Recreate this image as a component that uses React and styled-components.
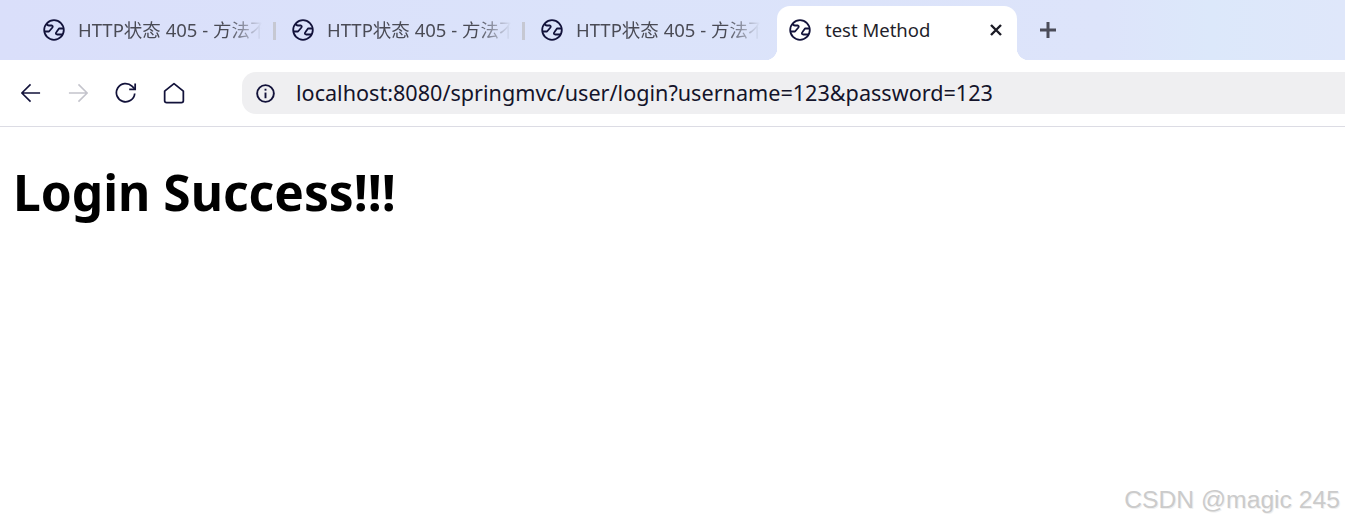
import React from "react";
import styled, { createGlobalStyle } from "styled-components";

const GlobalStyle = createGlobalStyle`
  html, body {
    margin: 0;
    padding: 0;
    background: #fff;
    overflow: hidden;
  }
`;

const Page = styled.div`
  position: relative;
  width: 1345px;
  height: 520px;
  font-family: "Noto Sans", "Noto Sans CJK SC", sans-serif;
  background: #fff;
`;

const TabStrip = styled.div`
  height: 60px;
  padding-left: 28px;
  display: flex;
  align-items: flex-end;
  background: linear-gradient(90deg, #dadffa 0%, #dbe3fa 45%, #dde4fa 82%, #dce8fa 90%, #dfe7fa 100%);
`;

const Tab = styled.div`
  position: relative;
  box-sizing: border-box;
  width: 249px;
  height: 54px;
  padding: 0 0 6px 15px;
  display: flex;
  align-items: center;
`;

const ActiveTab = styled(Tab)`
  width: 240px;
  margin-left: 2px;
  padding: 0 14px 6px 12px;
  background: #fff;
  border-radius: 13px 13px 0 0;

  &::before,
  &::after {
    content: "";
    position: absolute;
    bottom: 0;
    width: 12px;
    height: 12px;
  }
  &::before {
    left: -12px;
    background: radial-gradient(circle at 0 0, transparent 12px, #fff 12.5px);
  }
  &::after {
    right: -12px;
    background: radial-gradient(circle at 100% 0, transparent 12px, #fff 12.5px);
  }
`;

const Title = styled.span`
  width: 190px;
  margin-left: 13px;
  font-size: 18.5px;
  line-height: 24px;
  white-space: nowrap;
  color: #4a4b55;
  -webkit-mask-image: linear-gradient(90deg, #000 150px, transparent 184px);
  mask-image: linear-gradient(90deg, #000 150px, transparent 184px);
`;

const ActiveTitle = styled.span`
  flex: 1;
  margin-left: 14px;
  font-size: 18.5px;
  line-height: 24px;
  color: #1f1f2b;
`;

const Divider = styled.span`
  position: absolute;
  right: 1px;
  top: 16px;
  width: 3px;
  height: 18px;
  background: #c6c8d2;
`;

const NewTab = styled.div`
  margin: 0 0 6px 19px;
  width: 24px;
  height: 48px;
  display: flex;
  align-items: center;
  justify-content: center;
`;

const Toolbar = styled.div`
  box-sizing: border-box;
  height: 67px;
  padding: 12px 0 0 18px;
  display: flex;
  align-items: flex-start;
  background: #fff;
  border-radius: 13px 0 0 0;
  border-bottom: 1px solid #dcdce4;
`;

const NavButton = styled.div`
  width: 26px;
  height: 42px;
  margin-right: ${(p) => p.$gap}px;
  display: flex;
  align-items: center;
  justify-content: center;
`;

const AddressBar = styled.div`
  flex: 1;
  height: 42px;
  margin-left: 55px;
  padding-left: 14px;
  display: flex;
  align-items: center;
  background: #efeff1;
  border-radius: 14px 0 0 14px;
`;

const Url = styled.span`
  margin-left: 21px;
  font-size: 21.6px;
  line-height: 30px;
  color: #14142b;
  white-space: nowrap;
`;

const Heading = styled.h1`
  margin: 33px 0 0 13px;
  font-size: 49.7px;
  line-height: 64px;
  font-weight: 700;
  color: #000;
`;

const Watermark = styled.div`
  position: absolute;
  right: 5px;
  bottom: 6px;
  font-family: "Liberation Sans", Arial, sans-serif;
  font-size: 24.7px;
  line-height: 29px;
  color: #cbcbcb;
  text-shadow: 1px 1px 0 #f0f0f0;
`;

function GlobeIcon() {
  return (
    <svg width="22" height="22" viewBox="0 0 22 22" fill="none" stroke="#12123a" strokeWidth="1.8">
      <circle cx="11" cy="11" r="9.8" />
      <path d="M1.5 12.5 H6 L9 9 Q10.5 7 9 6.5 H6 Q4 6.5 4 4.5" strokeLinejoin="round" />
      <path d="M20.5 9.5 H16 L13.5 13 Q12 15 14 15.5 H20" strokeLinejoin="round" />
    </svg>
  );
}

function CloseIcon() {
  return (
    <svg width="14" height="14" viewBox="0 0 14 14" stroke="#1b1b25" strokeWidth="2.4">
      <path d="M2 2 L12 12 M12 2 L2 12" />
    </svg>
  );
}

function PlusIcon() {
  return (
    <svg width="18" height="18" viewBox="0 0 18 18" stroke="#4b4c58" strokeWidth="3">
      <path d="M9 1 V17 M1 9 H17" />
    </svg>
  );
}

function ArrowIcon({ color, flip }) {
  return (
    <svg
      width="20"
      height="20"
      viewBox="0 0 22 22"
      fill="none"
      stroke={color}
      strokeWidth="1.7"
      style={flip ? { transform: "scaleX(-1)" } : undefined}
    >
      <path d="M1 11 H21 M10.5 1.5 L1 11 L10.5 20.5" />
    </svg>
  );
}

function ReloadIcon() {
  return (
    <svg width="22" height="22" viewBox="0 0 24 24" fill="none" stroke="#12123a" strokeWidth="1.9">
      <path d="M21.5 12.5 A10 10 0 1 1 18.5 4.5 L21.5 7.5" />
      <path d="M22 1.5 V8 H15.5" />
    </svg>
  );
}

function HomeIcon() {
  return (
    <svg width="22" height="22" viewBox="0 0 24 24" fill="none" stroke="#12123a" strokeWidth="1.9" strokeLinejoin="round">
      <path d="M12 1.8 L22.2 10 V20.5 Q22.2 22.6 20 22.6 H4 Q1.8 22.6 1.8 20.5 V10 Z" />
    </svg>
  );
}

function InfoIcon() {
  return (
    <svg width="19" height="19" viewBox="0 0 20 20" fill="none" stroke="#12123a" strokeWidth="2">
      <circle cx="10" cy="10" r="8.8" />
      <path d="M10 9 V15" />
      <path d="M10 5 V7" />
    </svg>
  );
}

const tabs = ["HTTP状态 405 - 方法不", "HTTP状态 405 - 方法不", "HTTP状态 405 - 方法不"];

export default function App() {
  return (
    <Page>
      <GlobalStyle />
      <TabStrip>
        {tabs.map((title, i) => (
          <Tab key={i}>
            <GlobeIcon />
            <Title>{title}</Title>
            {i < 2 && <Divider />}
          </Tab>
        ))}
        <ActiveTab>
          <GlobeIcon />
          <ActiveTitle>test Method</ActiveTitle>
          <CloseIcon />
        </ActiveTab>
        <NewTab>
          <PlusIcon />
        </NewTab>
      </TabStrip>
      <Toolbar>
        <NavButton $gap={21}>
          <ArrowIcon color="#12123a" />
        </NavButton>
        <NavButton $gap={22}>
          <ArrowIcon color="#c4c4cc" flip />
        </NavButton>
        <NavButton $gap={22}>
          <ReloadIcon />
        </NavButton>
        <NavButton $gap={0}>
          <HomeIcon />
        </NavButton>
        <AddressBar>
          <InfoIcon />
          <Url>localhost:8080/springmvc/user/login?username=123&amp;password=123</Url>
        </AddressBar>
      </Toolbar>
      <Heading>Login Success!!!</Heading>
      <Watermark>CSDN @magic 245</Watermark>
    </Page>
  );
}
